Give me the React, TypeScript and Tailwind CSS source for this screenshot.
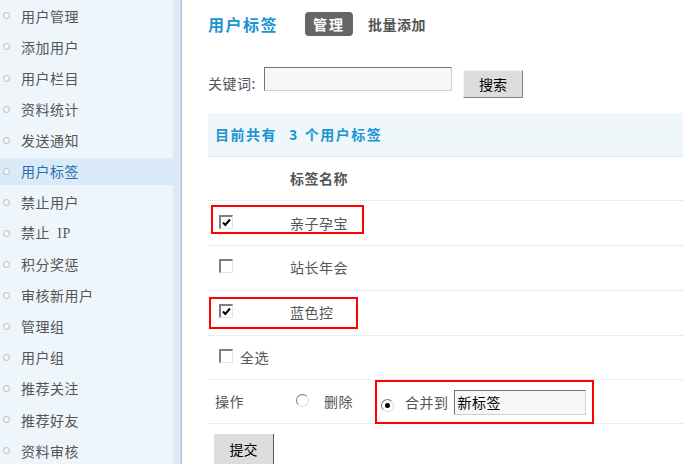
const menu = [
  "用户管理",
  "添加用户",
  "用户栏目",
  "资料统计",
  "发送通知",
  "用户标签",
  "禁止用户",
  "禁止 IP",
  "积分奖惩",
  "审核新用户",
  "管理组",
  "用户组",
  "推荐关注",
  "推荐好友",
  "资料审核",
];

const font = { fontFamily: '"Noto Sans CJK SC", "Liberation Sans", sans-serif' };

const Checkbox = ({ checked }: { checked?: boolean }) => (
  <span className="relative inline-block w-[14px] h-[14px] bg-white border-t-2 border-l-2 border-t-[#808080] border-l-[#808080] border-b border-r border-b-[#e3e3e3] border-r-[#e3e3e3] shrink-0">
    {checked && (
      <svg className="absolute left-[1px] top-[1px]" width="9" height="9" viewBox="0 0 9 9">
        <path d="M1 4.5 L3.3 7 L8 1.5" stroke="#000" strokeWidth="2" fill="none" />
      </svg>
    )}
  </span>
);

const Radio = ({ checked }: { checked?: boolean }) => (
  <span className="relative inline-flex items-center justify-center w-[13px] h-[13px] rounded-full bg-white border border-t-[#7a7a7a] border-l-[#7a7a7a] border-b-[#dcdcdc] border-r-[#dcdcdc] shrink-0">
    {checked && <span className="w-[5px] h-[5px] rounded-full bg-black" />}
  </span>
);

const Row = ({ children, className = "" }: { children: React.ReactNode; className?: string }) => (
  <div className={`relative flex items-center h-[45px] border-b border-dotted border-[#c6dff0] ${className}`}>
    {children}
  </div>
);

export default function App() {
  return (
    <div className="flex w-[683px] h-[464px] overflow-hidden bg-white text-[14px] text-[#555]" style={font}>
      <div className="flex shrink-0">
        <ul className="w-[173px] bg-[#eef6fc] pt-[2.5px] flex flex-col gap-[4.2px]">
          {menu.map((m) => (
            <li
              key={m}
              className={`flex items-center h-[27px] ${m === "用户标签" ? "bg-[#dbeaf8] text-[#2a6db2]" : ""}`}
            >
              <span className="ml-[3px] w-[7px] h-[7px] rounded-full border border-[#b8b8b8] bg-[#f8f8f8]" />
              <span className="ml-[11px] leading-none tracking-[0.5px]">
                {m === "禁止 IP" ? (
                  <>
                    禁止&nbsp;&nbsp;<span style={{ fontFamily: '"Liberation Serif", serif' }}>IP</span>
                  </>
                ) : (
                  m
                )}
              </span>
            </li>
          ))}
        </ul>
        <div className="w-[7px] bg-[#dceaf7]" />
        <div className="w-[1px] bg-[#c6d9ea]" />
        <div className="w-[1px] bg-[#aec8de]" />
      </div>

      <div className="flex-1 pl-[26px] flex flex-col">
        <div className="flex items-center h-[24px] mt-[12px]">
          <span className="text-[16px] font-bold text-[#1b95d2] tracking-[1.5px] leading-none">用户标签</span>
          <span className="ml-[27px] h-[24px] px-[8px] rounded-[4px] bg-[#666] text-white font-bold tracking-[2px] flex items-center leading-none">
            管理
          </span>
          <span className="ml-[15px] font-bold tracking-[0.5px] leading-none">批量添加</span>
        </div>

        <div className="flex items-start mt-[31px]">
          <span className="mt-[4px] leading-[24px] tracking-[0.5px]">关键词:</span>
          <span className="ml-[8px] w-[188px] h-[24px] bg-[#f7f7f7] border border-t-[#747474] border-l-[#747474] border-b-[#cfcfcf] border-r-[#cfcfcf]" />
          <span className="ml-[11px] mt-[3px] w-[60px] h-[28px] bg-[#ddd] border border-t-[#f2f2f2] border-l-[#f2f2f2] border-b-[#808080] border-r-[#808080] flex items-center justify-center text-black leading-none">
            搜索
          </span>
        </div>

        <div className="mt-[15px] h-[44px] bg-[#eff7fb] border-b border-dotted border-[#c6dff0] flex items-center pl-[7px] font-bold text-[#1b95d2] tracking-[1.5px]">
          <span>目前共有</span>
          <span className="ml-[12px]">3</span>
          <span className="ml-[6px]">个用户标签</span>
        </div>

        <Row>
          <span className="ml-[82px] font-bold tracking-[0.5px]">标签名称</span>
        </Row>
        <Row>
          <span className="ml-[11px]"><Checkbox checked /></span>
          <span className="ml-[57px] tracking-[0.5px]">亲子孕宝</span>
          <span className="absolute left-[3px] top-[4px] w-[153px] h-[29px] border-2 border-[#f00]" />
        </Row>
        <Row>
          <span className="ml-[11px]"><Checkbox /></span>
          <span className="ml-[57px] tracking-[0.5px]">站长年会</span>
        </Row>
        <Row>
          <span className="ml-[11px]"><Checkbox checked /></span>
          <span className="ml-[57px] tracking-[0.5px]">蓝色控</span>
          <span className="absolute left-[1px] top-[6px] w-[149px] h-[32px] border-2 border-[#f00]" />
        </Row>
        <Row>
          <span className="ml-[11px]"><Checkbox /></span>
          <span className="ml-[7px] tracking-[0.5px]">全选</span>
        </Row>

        <div className="flex items-center h-[44px] border-b border-dotted border-[#c6dff0]">
          <span className="ml-[7px] tracking-[0.5px]">操作</span>
          <span className="ml-[52px]"><Radio /></span>
          <span className="ml-[15px] tracking-[0.5px]">删除</span>
          <div className="ml-[22px] self-start h-[44px] w-[219px] border-2 border-[#f00] flex items-center">
            <span className="ml-[4px]"><Radio checked /></span>
            <span className="ml-[11px] tracking-[0.5px]">合并到</span>
            <span className="ml-[5px] w-[132px] h-[25px] bg-[#f7f7f7] border border-t-[#747474] border-l-[#747474] border-b-[#cfcfcf] border-r-[#cfcfcf] flex items-center pl-[3px] text-black leading-none tracking-[0.5px]">
              新标签
            </span>
          </div>
        </div>

        <div className="mt-[10px] ml-[6px] w-[60px] h-[30px] bg-[#ddd] border-r border-[#555] flex items-center justify-center text-black leading-none">
          提交
        </div>
      </div>
    </div>
  );
}
